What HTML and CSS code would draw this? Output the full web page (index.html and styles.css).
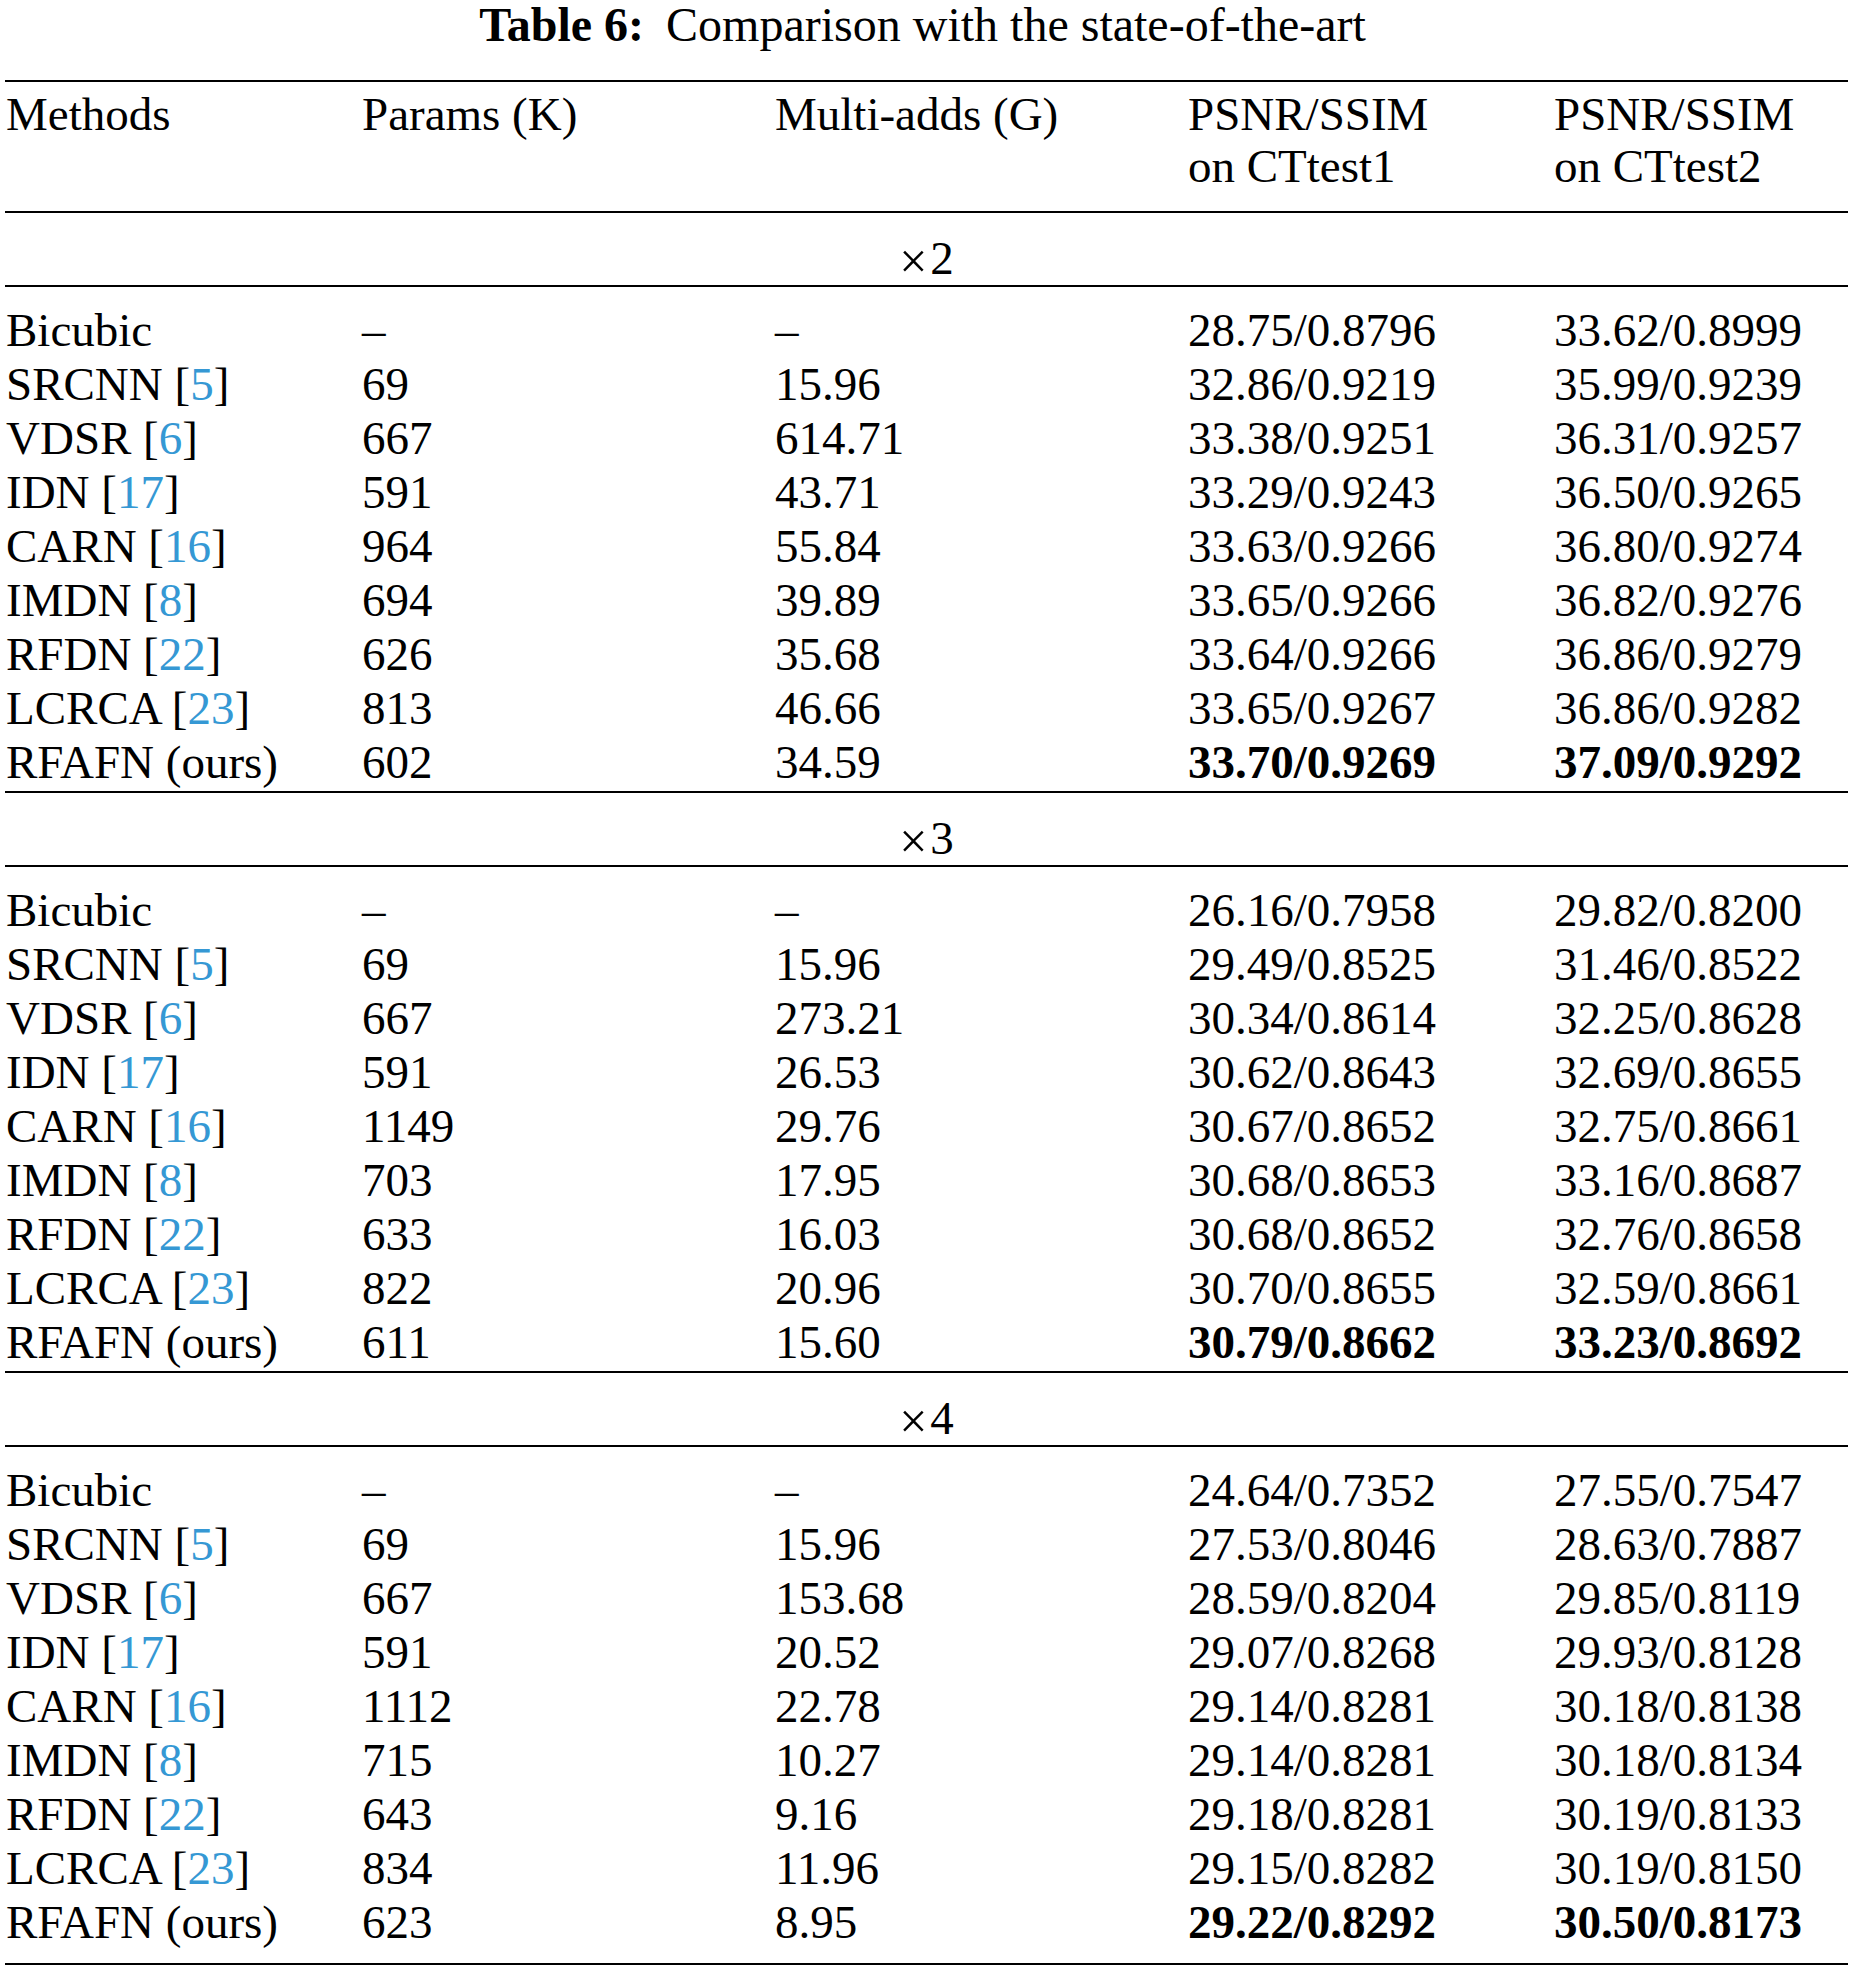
FILE: index.html
```html
<!DOCTYPE html>
<html lang="en">
<head>
<meta charset="utf-8">
<title>Table 6: Comparison with the state-of-the-art</title>
<link rel="stylesheet" href="styles.css">
</head>
<body>
<main class="page">
  <h1 class="caption"><b class="caption-label">Table 6:</b><span class="caption-gap"></span>Comparison with the state-of-the-art</h1>
  <table class="results">
    <colgroup>
      <col class="c-method"><col class="c-params"><col class="c-madds"><col class="c-ct1"><col class="c-ct2">
    </colgroup>
    <thead>
      <tr>
        <th>Methods</th>
        <th>Params (K)</th>
        <th>Multi-adds (G)</th>
        <th>PSNR/SSIM<br>on CTtest1</th>
        <th>PSNR/SSIM<br>on CTtest2</th>
      </tr>
    </thead>
    <tbody>
      <tr class="group"><td colspan="5"><span class="times">×</span>2</td></tr>
      <tr class="first"><td>Bicubic</td><td>–</td><td>–</td><td>28.75/0.8796</td><td>33.62/0.8999</td></tr>
      <tr><td>SRCNN [<span class="ref">5</span>]</td><td>69</td><td>15.96</td><td>32.86/0.9219</td><td>35.99/0.9239</td></tr>
      <tr><td>VDSR [<span class="ref">6</span>]</td><td>667</td><td>614.71</td><td>33.38/0.9251</td><td>36.31/0.9257</td></tr>
      <tr><td>IDN [<span class="ref">17</span>]</td><td>591</td><td>43.71</td><td>33.29/0.9243</td><td>36.50/0.9265</td></tr>
      <tr><td>CARN [<span class="ref">16</span>]</td><td>964</td><td>55.84</td><td>33.63/0.9266</td><td>36.80/0.9274</td></tr>
      <tr><td>IMDN [<span class="ref">8</span>]</td><td>694</td><td>39.89</td><td>33.65/0.9266</td><td>36.82/0.9276</td></tr>
      <tr><td>RFDN [<span class="ref">22</span>]</td><td>626</td><td>35.68</td><td>33.64/0.9266</td><td>36.86/0.9279</td></tr>
      <tr><td>LCRCA [<span class="ref">23</span>]</td><td>813</td><td>46.66</td><td>33.65/0.9267</td><td>36.86/0.9282</td></tr>
      <tr class="last"><td>RFAFN (ours)</td><td>602</td><td>34.59</td><td class="best">33.70/0.9269</td><td class="best">37.09/0.9292</td></tr>

      <tr class="group"><td colspan="5"><span class="times">×</span>3</td></tr>
      <tr class="first"><td>Bicubic</td><td>–</td><td>–</td><td>26.16/0.7958</td><td>29.82/0.8200</td></tr>
      <tr><td>SRCNN [<span class="ref">5</span>]</td><td>69</td><td>15.96</td><td>29.49/0.8525</td><td>31.46/0.8522</td></tr>
      <tr><td>VDSR [<span class="ref">6</span>]</td><td>667</td><td>273.21</td><td>30.34/0.8614</td><td>32.25/0.8628</td></tr>
      <tr><td>IDN [<span class="ref">17</span>]</td><td>591</td><td>26.53</td><td>30.62/0.8643</td><td>32.69/0.8655</td></tr>
      <tr><td>CARN [<span class="ref">16</span>]</td><td>1149</td><td>29.76</td><td>30.67/0.8652</td><td>32.75/0.8661</td></tr>
      <tr><td>IMDN [<span class="ref">8</span>]</td><td>703</td><td>17.95</td><td>30.68/0.8653</td><td>33.16/0.8687</td></tr>
      <tr><td>RFDN [<span class="ref">22</span>]</td><td>633</td><td>16.03</td><td>30.68/0.8652</td><td>32.76/0.8658</td></tr>
      <tr><td>LCRCA [<span class="ref">23</span>]</td><td>822</td><td>20.96</td><td>30.70/0.8655</td><td>32.59/0.8661</td></tr>
      <tr class="last"><td>RFAFN (ours)</td><td>611</td><td>15.60</td><td class="best">30.79/0.8662</td><td class="best">33.23/0.8692</td></tr>

      <tr class="group"><td colspan="5"><span class="times">×</span>4</td></tr>
      <tr class="first"><td>Bicubic</td><td>–</td><td>–</td><td>24.64/0.7352</td><td>27.55/0.7547</td></tr>
      <tr><td>SRCNN [<span class="ref">5</span>]</td><td>69</td><td>15.96</td><td>27.53/0.8046</td><td>28.63/0.7887</td></tr>
      <tr><td>VDSR [<span class="ref">6</span>]</td><td>667</td><td>153.68</td><td>28.59/0.8204</td><td>29.85/0.8119</td></tr>
      <tr><td>IDN [<span class="ref">17</span>]</td><td>591</td><td>20.52</td><td>29.07/0.8268</td><td>29.93/0.8128</td></tr>
      <tr><td>CARN [<span class="ref">16</span>]</td><td>1112</td><td>22.78</td><td>29.14/0.8281</td><td>30.18/0.8138</td></tr>
      <tr><td>IMDN [<span class="ref">8</span>]</td><td>715</td><td>10.27</td><td>29.14/0.8281</td><td>30.18/0.8134</td></tr>
      <tr><td>RFDN [<span class="ref">22</span>]</td><td>643</td><td>9.16</td><td>29.18/0.8281</td><td>30.19/0.8133</td></tr>
      <tr><td>LCRCA [<span class="ref">23</span>]</td><td>834</td><td>11.96</td><td>29.15/0.8282</td><td>30.19/0.8150</td></tr>
      <tr class="last final"><td>RFAFN (ours)</td><td>623</td><td>8.95</td><td class="best">29.22/0.8292</td><td class="best">30.50/0.8173</td></tr>
    </tbody>
  </table>
</main>
</body>
</html>
```

FILE: styles.css
```css
html, body {
  margin: 0;
  padding: 0;
  background: #ffffff;
}

body {
  font-family: "Liberation Serif", "Times New Roman", serif;
  color: #000000;
}

.page {
  width: 1854px;
}

.caption {
  margin: 0;
  font-size: 48px;
  line-height: 50px;
  font-weight: normal;
  text-align: center;
  padding: 0 9px 0 0;
}

.caption-label {
  font-weight: bold;
}

.caption-gap {
  display: inline-block;
  width: 22px;
}

.results {
  margin: 30px 0 0 5px;
  width: 1843px;
  border-collapse: collapse;
  table-layout: fixed;
  font-size: 47px;
  line-height: 54px;
}

.c-method { width: 356px; }
.c-params { width: 413px; }
.c-madds  { width: 413px; }
.c-ct1    { width: 366px; }
.c-ct2    { width: 295px; }

.results th,
.results td {
  padding: 0 0 0 1px;
  text-align: left;
  font-weight: normal;
  white-space: nowrap;
  vertical-align: top;
}

.results thead tr {
  border-top: 2px solid #000;
  border-bottom: 2px solid #000;
}

.results th {
  line-height: 52px;
  padding-top: 6px;
  padding-bottom: 19px;
}

.results .group td {
  text-align: center;
  padding: 18px 0 0 0;
}

.times {
  font-size: 50px;
  line-height: 1px;
  vertical-align: -4px;
  margin-right: 3px;
}

.results .group {
  border-bottom: 2px solid #000;
}

.results .first td {
  padding-top: 16px;
}

.results .last {
  border-bottom: 2px solid #000;
}

.results .last td {
  padding-bottom: 2px;
}

.results .final td {
  padding-bottom: 14px;
}

.ref {
  color: #3598d4;
}

.results td.best {
  font-weight: bold;
}
```
